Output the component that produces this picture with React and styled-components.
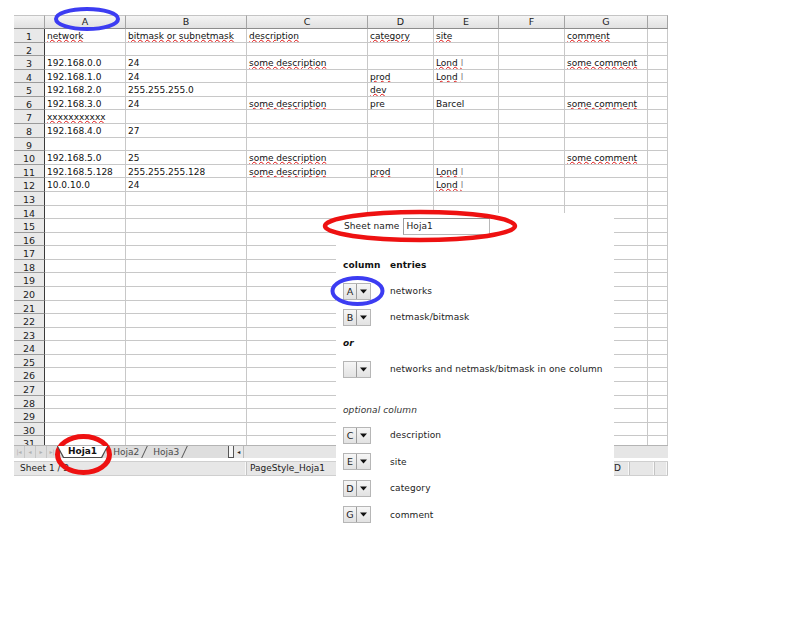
import React from "react";
import styled, { createGlobalStyle, css } from "styled-components";

const Global = createGlobalStyle`
  html, body { margin: 0; padding: 0; background: #ffffff; }
  body { font-family: "DejaVu Sans", sans-serif; }
  * { box-sizing: border-box; }
`;

const COLS = [31, 81, 121, 121, 66, 65, 66, 83, 20];
const LETTERS = ["", "A", "B", "C", "D", "E", "F", "G", ""];
const ROW_H = 13.59;

const Page = styled.div`
  position: relative;
  width: 800px;
  height: 640px;
  padding: 15px 0 0 14px;
  overflow: hidden;
`;

const Sheet = styled.div`
  width: 654px;
  display: flex;
  flex-direction: column;
`;

const Grid = styled.div`
  display: grid;
  grid-template-columns: ${COLS.map((c) => c + "px").join(" ")};
  grid-template-rows: 14px repeat(31, ${ROW_H}px);
  height: 430px;
  overflow: hidden;
  font-family: "DejaVu Sans", sans-serif;
  font-size: 9px;
  color: #111;
`;

const ColHead = styled.div`
  background: linear-gradient(#f4f4f4, #e1e1e1);
  border-right: 1px solid #a4a4a4;
  border-bottom: 1px solid #8c8c8c;
  border-top: 1px solid #c4c4c4;
  text-align: center;
  font-size: 9.5px;
  line-height: 12px;
  color: #222;
`;

const RowHead = styled.div`
  background: #e9e9e9;
  border-right: 1px solid #3a3a3a;
  border-bottom: 1px solid #9a9a9a;
  text-align: center;
  font-size: 9.5px;
  line-height: 13px;
  padding-top: 1px;
  color: #222;
`;

const Cell = styled.div`
  border-right: 1px solid #c8c8c8;
  border-bottom: 1px solid #c8c8c8;
  padding: 1px 0 0 2px;
  line-height: 12px;
  white-space: nowrap;
  overflow: hidden;
`;

const Spell = styled.span`
  text-decoration: underline wavy #e01010;
  text-decoration-thickness: 1px;
  text-underline-offset: 0px;
`;

const Cut = styled.span`
  color: #7a7a7a;
`;

const TabBar = styled.div`
  display: flex;
  height: 13px;
  background: #dedede;
  border-top: 1px solid #b4b4b4;
  font-family: "DejaVu Sans", sans-serif;
  font-size: 9px;
`;

const NavBtn = styled.div`
  width: 11px;
  height: 12px;
  border-right: 1px solid #c6c6c6;
  color: #b0b0b0;
  font-size: 6px;
  line-height: 12px;
  text-align: center;
`;

const ActiveTab = styled.div`
  margin-left: -1px;
  height: 12px;
  padding: 0 1px 1px;
  background: #4a4a4a;
  clip-path: polygon(0 0, 100% 0, calc(100% - 6px) 100%, 6px 100%);
  position: relative;
  z-index: 1;
`;

const ActiveFace = styled.div`
  height: 11px;
  padding: 0 10px;
  background: #ffffff;
  clip-path: polygon(0 0, 100% 0, calc(100% - 6px) 100%, 6px 100%);
  font-weight: bold;
  line-height: 11px;
  color: #111;
`;

const Tab = styled.div`
  position: relative;
  height: 12px;
  padding: 0 9px 0 5px;
  line-height: 12px;
  color: #4a4a4a;
  &::after {
    content: "";
    position: absolute;
    top: 0;
    bottom: 0;
    right: 3px;
    border-right: 1px solid #555;
    transform: skewX(-25deg);
  }
`;

const TabGap = styled.div`
  width: 40px;
`;

const Splitter = styled.div`
  width: 6px;
  height: 12px;
  background: #f6f6f6;
  border-left: 1px solid #555;
  border-right: 1px solid #555;
  border-bottom: 1px solid #555;
`;

const ScrollBtn = styled.div`
  width: 10px;
  height: 12px;
  border-right: 1px solid #b8b8b8;
  background: #e8e8e8;
  font-size: 6px;
  line-height: 12px;
  text-align: center;
  color: #222;
`;

const ScrollTrack = styled.div`
  flex: 1;
  background: #e6e6e6;
`;

const StatusBar = styled.div`
  margin-top: 3px;
  display: flex;
  height: 15px;
  background: #e7e7e7;
  border-top: 1px solid #cfcfcf;
  border-bottom: 1px solid #cfcfcf;
  font-family: "DejaVu Sans", sans-serif;
  font-size: 9px;
  color: #222;
`;

const StatusCell = styled.div`
  width: ${(p) => p.$w}px;
  flex: ${(p) => (p.$grow ? 1 : "none")};
  padding: 0 ${(p) => (p.$right ? "8px" : "3px")} 0 ${(p) => p.$pl || 3}px;
  line-height: 13px;
  text-align: ${(p) => (p.$right ? "right" : "left")};
  border-right: 1px solid #c4c4c4;
  box-shadow: inset -1px 0 0 #f8f8f8;
  white-space: nowrap;
  overflow: hidden;
`;

const Panel = styled.div`
  position: absolute;
  left: 336px;
  top: 213px;
  width: 278px;
  bottom: 0;
  background: #ffffff;
  padding-left: 7px;
  font-family: "DejaVu Sans", sans-serif;
  font-size: 9px;
  letter-spacing: 0.1px;
  color: #222;
`;

const NameRow = styled.div`
  display: flex;
  align-items: center;
  gap: 4px;
  height: 26px;
  padding-left: 1px;
`;

const NameInput = styled.input`
  width: 87px;
  height: 17px;
  border: 1px solid #b8b8b8;
  border-top-color: #8e8e8e;
  border-left-color: #9e9e9e;
  padding: 0 2px;
  font-family: "DejaVu Sans", sans-serif;
  font-size: 9px;
  letter-spacing: 0.1px;
  color: #222;
  outline: none;
`;

const FormRow = styled.div`
  display: grid;
  grid-template-columns: 47px 1fr;
  align-items: center;
  height: ${(p) => p.$h || 26}px;
  margin-top: ${(p) => p.$mt || 0}px;
  ${(p) =>
    p.$head &&
    css`
      font-weight: bold;
      color: #111;
    `}
`;

const Note = styled.div`
  height: 26px;
  line-height: 26px;
  margin-top: ${(p) => p.$mt || 0}px;
  font-style: italic;
  font-weight: ${(p) => (p.$bold ? "bold" : "normal")};
  color: ${(p) => (p.$bold ? "#111" : "#333")};
`;

const Select = styled.div`
  display: flex;
  width: 28px;
  height: 17px;
  border: 1px solid #b6b6b6;
  background: linear-gradient(#f6f6f6, #e2e2e2);
`;

const SelectValue = styled.div`
  width: 13px;
  border-right: 1px solid #9c9c9c;
  text-align: center;
  line-height: 15px;
  font-size: 9.5px;
  color: #222;
`;

const SelectArrow = styled.div`
  flex: 1;
  display: flex;
  align-items: center;
  justify-content: center;
`;

const Marks = styled.svg`
  position: absolute;
  left: 0;
  top: 0;
  pointer-events: none;
`;

const U = ({ children }) => <Spell>{children}</Spell>;
const London = () => (
  <Spell>
    Lond <Cut>l</Cut>
  </Spell>
);

const DATA = {
  1: { A: <U>network</U>, B: <U>bitmask or subnetmask</U>, C: <U>description</U>, D: <U>category</U>, E: <U>site</U>, G: <U>comment</U> },
  3: { A: "192.168.0.0", B: "24", C: <U>some description</U>, E: <London />, G: <U>some comment</U> },
  4: { A: "192.168.1.0", B: "24", D: <U>prod</U>, E: <London /> },
  5: { A: "192.168.2.0", B: "255.255.255.0", D: <U>dev</U> },
  6: { A: "192.168.3.0", B: "24", C: <U>some description</U>, D: "pre", E: "Barcel", G: <U>some comment</U> },
  7: { A: <U>xxxxxxxxxxx</U> },
  8: { A: "192.168.4.0", B: "27" },
  10: { A: "192.168.5.0", B: "25", C: <U>some description</U>, G: <U>some comment</U> },
  11: { A: "192.168.5.128", B: "255.255.255.128", C: <U>some description</U>, D: <U>prod</U>, E: <London /> },
  12: { A: "10.0.10.0", B: "24", E: <London /> },
};

const Arrow = () => (
  <svg width="7" height="5" viewBox="0 0 7 5">
    <path d="M0 0.5 H7 L3.5 4.5 Z" fill="#111" />
  </svg>
);

const ColumnSelect = ({ value }) => (
  <Select>
    <SelectValue>{value}</SelectValue>
    <SelectArrow>
      <Arrow />
    </SelectArrow>
  </Select>
);

export default function App() {
  const rows = [];
  for (let r = 1; r <= 31; r++) {
    const d = DATA[r] || {};
    rows.push(<RowHead key={"h" + r}>{r}</RowHead>);
    LETTERS.slice(1).forEach((L, i) => {
      rows.push(<Cell key={r + "-" + i}>{L ? d[L] : null}</Cell>);
    });
  }

  return (
    <Page>
      <Global />
      <Sheet>
        <Grid>
          {LETTERS.map((L, i) => (
            <ColHead key={"c" + i}>{L}</ColHead>
          ))}
          {rows}
        </Grid>
        <TabBar>
          <NavBtn>|◂</NavBtn>
          <NavBtn>◂</NavBtn>
          <NavBtn>▸</NavBtn>
          <NavBtn>▸|</NavBtn>
          <ActiveTab>
            <ActiveFace>Hoja1</ActiveFace>
          </ActiveTab>
          <Tab>Hoja2</Tab>
          <Tab>Hoja3</Tab>
          <TabGap />
          <Splitter />
          <ScrollBtn>◂</ScrollBtn>
          <ScrollTrack />
        </TabBar>
        <StatusBar>
          <StatusCell $w={233} $pl={6}>Sheet 1 / 3</StatusCell>
          <StatusCell $grow>PageStyle_Hoja1</StatusCell>
          <StatusCell $w={70} $right>STD</StatusCell>
          <StatusCell $w={25} />
          <StatusCell $w={13} />
        </StatusBar>
      </Sheet>

      <Panel>
        <NameRow>
          <span>Sheet name</span>
          <NameInput readOnly value="Hoja1" />
        </NameRow>
        <FormRow $head $mt={13}>
          <span>column</span>
          <span>entries</span>
        </FormRow>
        <FormRow>
          <ColumnSelect value="A" />
          <span>networks</span>
        </FormRow>
        <FormRow>
          <ColumnSelect value="B" />
          <span>netmask/bitmask</span>
        </FormRow>
        <Note $bold>or</Note>
        <FormRow>
          <ColumnSelect value="" />
          <span>networks and netmask/bitmask in one column</span>
        </FormRow>
        <Note $mt={15}>optional column</Note>
        <FormRow $h={26.5} $mt={-1}>
          <ColumnSelect value="C" />
          <span>description</span>
        </FormRow>
        <FormRow $h={26.5}>
          <ColumnSelect value="E" />
          <span>site</span>
        </FormRow>
        <FormRow $h={26.5}>
          <ColumnSelect value="D" />
          <span>category</span>
        </FormRow>
        <FormRow $h={26.5}>
          <ColumnSelect value="G" />
          <span>comment</span>
        </FormRow>
      </Panel>

      <Marks width="800" height="640" viewBox="0 0 800 640">
        <ellipse cx="87" cy="19" rx="31" ry="10" fill="none" stroke="#3c3cf2" strokeWidth="4" />
        <ellipse cx="357.5" cy="291" rx="25" ry="13" fill="none" stroke="#3c3cf2" strokeWidth="4" />
        <ellipse cx="420" cy="226" rx="95" ry="14" fill="none" stroke="#ee1111" strokeWidth="4.5" />
        <ellipse cx="83.5" cy="454.5" rx="26" ry="18" fill="none" stroke="#ee1111" strokeWidth="5" />
      </Marks>
    </Page>
  );
}
